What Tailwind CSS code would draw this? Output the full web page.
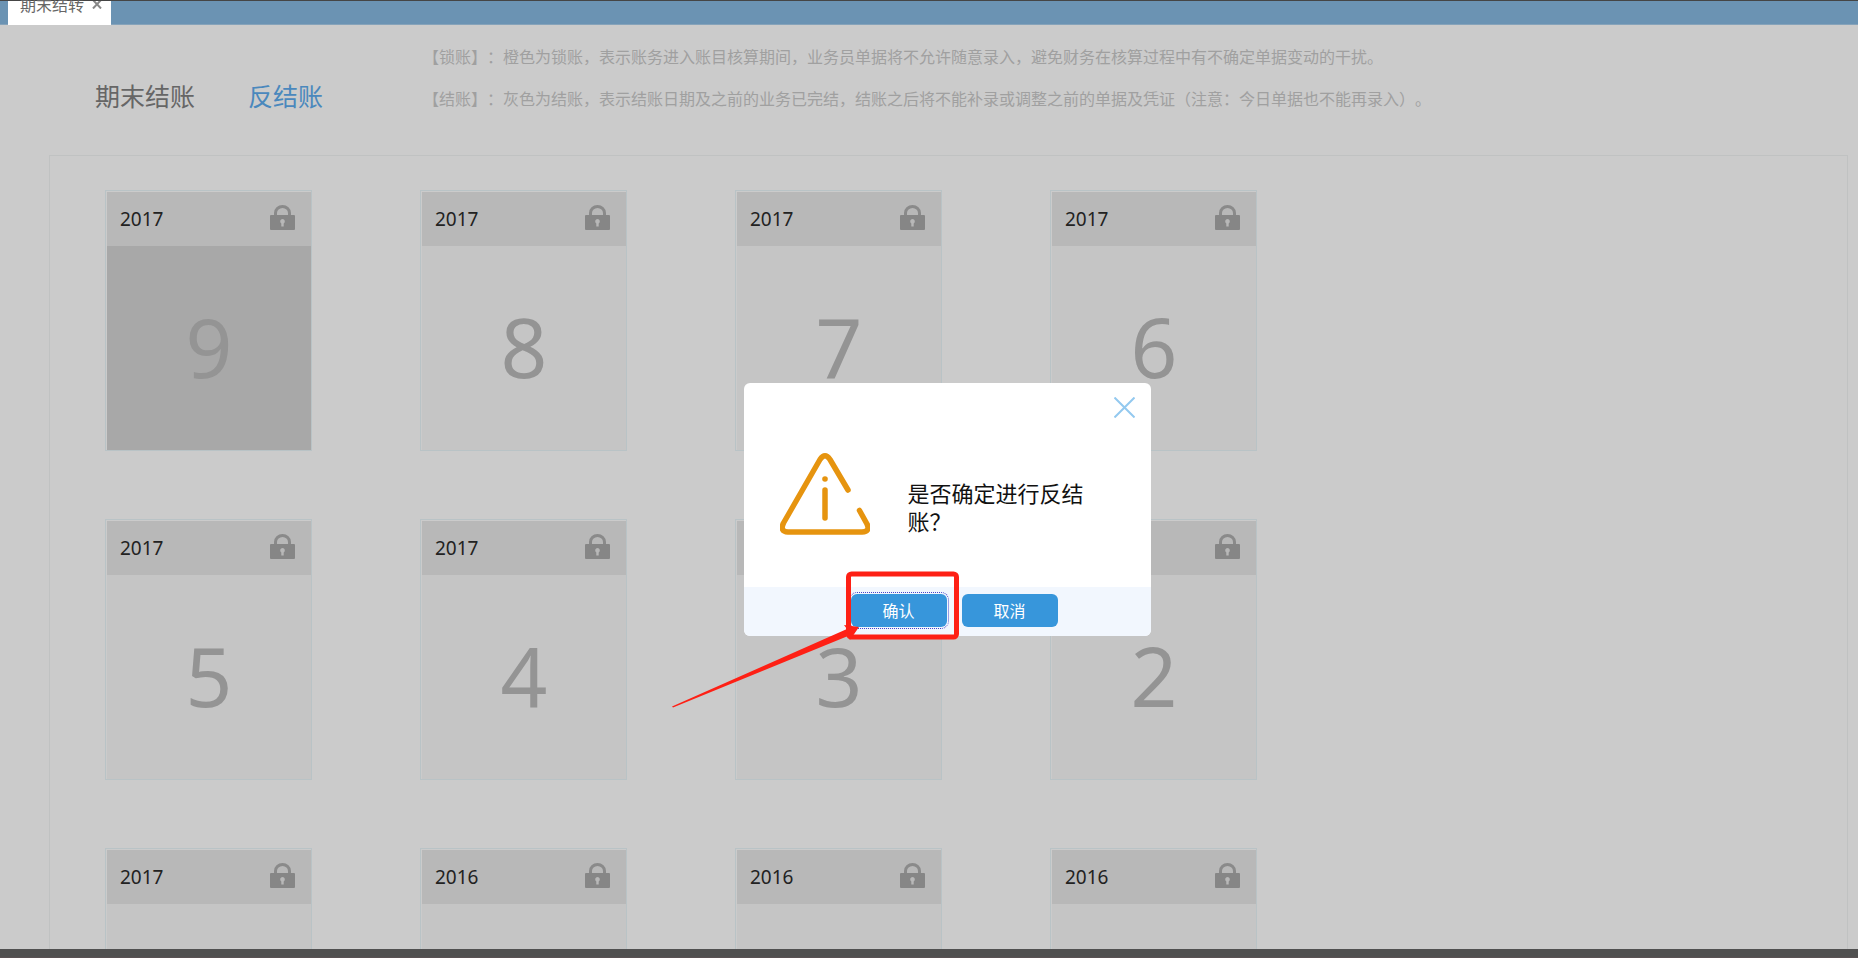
<!DOCTYPE html>
<html lang="zh-CN">
<head>
  <meta charset="UTF-8" />
  <meta name="viewport" content="width=device-width, initial-scale=1.0" />
  <title>期末结转</title>
  <script src="https://cdn.jsdelivr.net/npm/@tailwindcss/browser@4"></script>
</head>
<body class="h-screen overflow-hidden flex flex-col bg-[#cbcbcb] text-[#333] font-['Noto_Sans','Noto_Sans_CJK_SC',sans-serif] [text-spacing-trim:space-all]">

  <!-- Tab bar -->
  <header class="shrink-0 h-[25px] pl-2 flex bg-[#6b93b3] border-t border-t-[#454545] border-b border-b-[#86a3ba]">
    <div class="h-6 w-[103px] pl-3 flex items-start bg-white text-base text-[#666]">
      <a href="#" class="-mt-2 leading-6">期末结转</a>
      <button type="button" aria-label="关闭标签" class="ml-2">
        <svg class="w-[10px] h-2" viewBox="0 0 10 8" fill="none" stroke="#888" stroke-width="2"><path d="M1 -1L9 7.500M9 -1L1 7.500" /></svg>
      </button>
    </div>
  </header>

  <main class="flex-1 min-h-0 flex flex-col pl-[49px] pr-[10px]">
    <div class="shrink-0 h-[130px] flex">
      <nav class="w-[374px] pl-[46px] pt-[51px] flex gap-[53px] text-[25px] leading-10">
        <a href="#" class="text-[#666]">期末结账</a>
        <a href="#" class="text-[#4a88bd]">反结账</a>
      </nav>
      <div class="pt-3 text-base text-[#a0a0a0] whitespace-nowrap">
        <p class="h-[42px] leading-10">【锁账】：橙色为锁账，表示账务进入账目核算期间，业务员单据将不允许随意录入，避免财务在核算过程中有不确定单据变动的干扰。</p>
        <p class="leading-10">【结账】：灰色为结账，表示结账日期及之前的业务已完结，结账之后将不能补录或调整之前的单据及凭证（注意：今日单据也不能再录入）。</p>
      </div>
    </div>

    <section class="flex-1 min-h-0 overflow-hidden border border-b-0 border-[#c0c2c2] pl-[55px] pt-[34px]">
      <div id="months" class="grid grid-cols-[repeat(4,207px)] gap-x-[108px] gap-y-[68px]"></div>
    </section>
  </main>

  <footer class="shrink-0 h-[9px] bg-[#505050] border-b border-[#5a5254]"></footer>

  <!-- Confirm dialog -->
  <div class="fixed inset-0 flex items-start justify-center pl-9 pt-[383px]">
    <div role="dialog" aria-labelledby="message" class="relative w-[407px] rounded-md bg-white">
      <button type="button" aria-label="关闭" class="absolute right-4 top-[14px]">
        <svg class="w-[21px] h-[21px]" viewBox="0 0 21 21" fill="none" stroke="#93c9ef" stroke-width="2"><path d="M0.5 0.5L20.5 20.5M20.5 0.5L0.5 20.5" /></svg>
      </button>
      <div class="h-[204px] flex pl-9">
        <svg class="w-[90px] h-[82px] mt-[70px]" viewBox="0 0 90 82" fill="none" stroke="#e6940f" stroke-width="5.5" stroke-linecap="round" stroke-linejoin="round">
          <path d="M68 37L50 6.500Q45 -1 40 6.500L3.500 70Q-0.500 78.500 8 79H82Q90.500 78.500 87 71L79.500 57.500" />
          <path d="M45 37V65" />
          <circle cx="45" cy="26" r="2.800" fill="#e6940f" stroke="none" />
        </svg>
        <p id="message" class="ml-[38px] mt-24 w-[190px] text-[22px] leading-7 text-[#111]">是否确定进行反结账？</p>
      </div>
      <div class="h-[49px] flex items-center justify-center gap-[15px] pl-[14px] pb-[2px] rounded-b-md bg-[#f2f7fe] text-base text-white">
        <button type="button" class="w-24 h-[33px] rounded-md bg-[#3796db] outline-1 outline-dotted outline-offset-1 outline-[#4646c8]">确认</button>
        <button type="button" class="w-24 h-[33px] rounded-md bg-[#3796db]">取消</button>
      </div>

      <!-- Marker around the confirm button -->
      <svg class="absolute left-[-74px] top-[188px] w-[290px] h-[138px] pointer-events-none" viewBox="0 0 290 138" fill="none">
        <rect x="178.500" y="3" width="108" height="63" rx="3" stroke="#fe2015" stroke-width="5" />
        <path d="M2 135.500L177 58L174 54L189 56L180 69L178 65L3 136.500Z" fill="#fe2015" />
      </svg>
    </div>
  </div>

  <script>
    const months = [
      [2017, 9], [2017, 8], [2017, 7], [2017, 6],
      [2017, 5], [2017, 4], [2017, 3], [2017, 2],
      [2017, 1], [2016, 12], [2016, 11], [2016, 10],
    ];
    const grid = document.getElementById("months");

    months.forEach(([year, month], index) => {
      const body = index === 0 ? "bg-[#a8a8a8]" : "bg-[#c5c5c5]";
      grid.innerHTML += `
        <article class="h-[261px] flex flex-col border border-[#b9c3c6] pl-px pt-px">
          <div class="h-[54px] shrink-0 flex items-center justify-between pl-[13px] pr-4 bg-[#b8b8b8]">
            <span class="text-[19px] leading-7 text-[#222]">${year}</span>
            <svg class="w-[25px] h-[25px] mb-[3px]" viewBox="0 0 25 25" fill="none">
              <path d="M5.500 12V8a7 6.500 0 0 1 14 0V12" stroke="#8a8a8a" stroke-width="3" />
              <path fill="#868686" fill-rule="evenodd" d="M1 10H24a1 1 0 0 1 1 1V24a1 1 0 0 1-1 1H1a1 1 0 0 1-1-1V11a1 1 0 0 1 1-1ZM12.500 14a2.500 2.500 0 0 0-1.200 4.600V21.500H13.700V18.600A2.500 2.500 0 0 0 12.500 14Z" />
            </svg>
          </div>
          <div class="flex-1 flex items-center justify-center pb-1 text-[82px] leading-none text-[#949494] ${body}">${month}</div>
        </article>
      `;
    });
  </script>
</body>
</html>
